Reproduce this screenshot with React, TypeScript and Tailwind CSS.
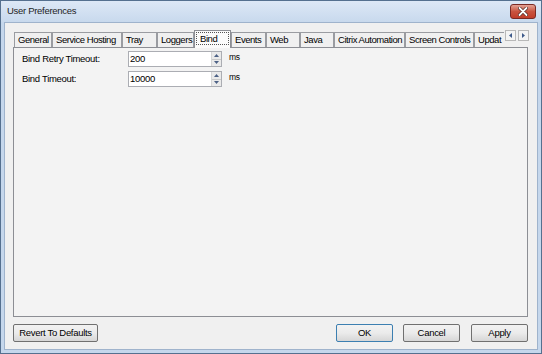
import React from "react";

const tabs = [
  { label: "General", w: 38 },
  { label: "Service Hosting", w: 70 },
  { label: "Tray", w: 35 },
  { label: "Loggers", w: 37 },
  { label: "Bind", w: 37, active: true },
  { label: "Events", w: 35 },
  { label: "Web", w: 34 },
  { label: "Java", w: 34 },
  { label: "Citrix Automation", w: 71 },
  { label: "Screen Controls", w: 69 },
  { label: "Updat", w: 30, cut: true },
];

function Spin() {
  return (
    <div className="flex flex-col w-[10px] h-full border-l border-[#d6d6d6]">
      <div className="flex-1 flex items-center justify-center bg-[#eaeaea] border-b border-[#c9c9c9]">
        <svg width="5" height="3" viewBox="0 0 5 3">
          <path d="M0 3 L2.5 0 L5 3 Z" fill="#4d6185" />
        </svg>
      </div>
      <div className="flex-1 flex items-center justify-center bg-[#eaeaea]">
        <svg width="5" height="3" viewBox="0 0 5 3">
          <path d="M0 0 L2.5 3 L5 0 Z" fill="#4d6185" />
        </svg>
      </div>
    </div>
  );
}

function NumberRow({ label, value }: { label: string; value: string }) {
  return (
    <div className="flex items-center h-[16px]">
      <span className="w-[106px]">{label}</span>
      <div className="flex items-stretch w-[94px] h-[16px] bg-white border border-[#abadb3]">
        <span className="flex-1 pl-[1px] leading-[14px]">{value}</span>
        <Spin />
      </div>
      <span className="ml-[7px] -mt-[4px] text-[8.5px]">ms</span>
    </div>
  );
}

function Btn({ label, w, def }: { label: string; w: string; def?: boolean }) {
  return (
    <button
      className={`${w} h-[18px] rounded-[2px] border ${
        def ? "border-[#3c7fb1]" : "border-[#707070]"
      } bg-gradient-to-b from-[#f2f2f2] via-[#ebebeb] to-[#d6d6d6] text-center leading-[16px] text-black`}
    >
      {label}
    </button>
  );
}

export default function App() {
  return (
    <div className="w-[542px] h-[354px] flex flex-col border border-[#55708f] bg-[#c5d7ec] font-['Liberation_Sans',Arial,sans-serif] text-[9.5px] tracking-[-0.3px] text-black">
      <div className="h-[21px] flex items-center justify-between pl-[6px] pr-[5px] bg-gradient-to-b from-[#dde8f6] to-[#c8d9ed]">
        <span className="text-[9.5px] text-[#1e1e1e]">User Preferences</span>
        <div className="w-[26px] h-[15px] -mt-[1px] rounded-[3px] border border-[#7a2a24] bg-gradient-to-b from-[#e3a295] via-[#c9533f] to-[#c13d2a] flex items-center justify-center">
          <svg width="10" height="9" viewBox="0 0 10 9">
            <path d="M1.5 1 L8.5 8 M8.5 1 L1.5 8" stroke="#4a2420" strokeWidth="3.2" strokeLinecap="round" />
            <path d="M1.5 1 L8.5 8 M8.5 1 L1.5 8" stroke="#ffffff" strokeWidth="1.8" strokeLinecap="round" />
          </svg>
        </div>
      </div>
      <div className="flex-1 mx-[3px] mb-[3px] bg-[#f0f0f0] border border-[#9fb3cc] flex flex-col">
        <div className="flex items-end h-[24px] pl-[9px] pr-[9px]">
          <div className="flex items-end w-[490px] h-[24px] tracking-[-0.45px]">
            {tabs.map((t) =>
              t.active ? (
                <div
                  key={t.label}
                  style={{ width: t.w }}
                  className="relative z-10 h-[18px] -mb-[1px] bg-[#fbfbfb] border border-b-0 border-[#8c8e94] pt-[1px] px-[1px] shrink-0"
                >
                  <div className="border border-dotted border-[#555] h-[13px] pl-[3px] leading-[11px]">{t.label}</div>
                </div>
              ) : (
                <div
                  key={t.label}
                  style={{ width: t.w }}
                  className={`h-[15px] bg-[#f0f0f0] border border-b-0 border-[#9a9ca1] ${
                    t.cut ? "border-r-0" : ""
                  } flex items-center pl-[3px] shrink-0 whitespace-nowrap`}
                >
                  {t.label}
                </div>
              )
            )}
          </div>
          <div className="flex gap-[2px] mb-[6px] ml-[1px]">
            <div className="w-[11px] h-[11px] border border-[#b8b8b8] bg-[#f4f4f4] flex items-center justify-center">
              <svg width="3" height="5" viewBox="0 0 3 5">
                <path d="M3 0 L0 2.5 L3 5 Z" fill="#3e5a8a" />
              </svg>
            </div>
            <div className="w-[11px] h-[11px] border border-[#b8b8b8] bg-[#f4f4f4] flex items-center justify-center">
              <svg width="3" height="5" viewBox="0 0 3 5">
                <path d="M0 0 L3 2.5 L0 5 Z" fill="#3e5a8a" />
              </svg>
            </div>
          </div>
        </div>
        <div className="ml-[8px] mr-[9px] h-[270px] border border-[#8c8e94] bg-[#f3f3f3] flex flex-col gap-[4px] pt-[3px] pl-[8px]">
          <NumberRow label="Bind Retry Timeout:" value="200" />
          <NumberRow label="Bind Timeout:" value="10000" />
        </div>
        <div className="flex items-center mt-[7px] pl-[8px] pr-[9px]">
          <Btn label="Revert To Defaults" w="w-[85px]" />
          <div className="flex-1" />
          <Btn label="OK" w="w-[57px]" def />
          <div className="w-[10px]" />
          <Btn label="Cancel" w="w-[57px]" />
          <div className="w-[11px]" />
          <Btn label="Apply" w="w-[57px]" />
        </div>
      </div>
    </div>
  );
}
